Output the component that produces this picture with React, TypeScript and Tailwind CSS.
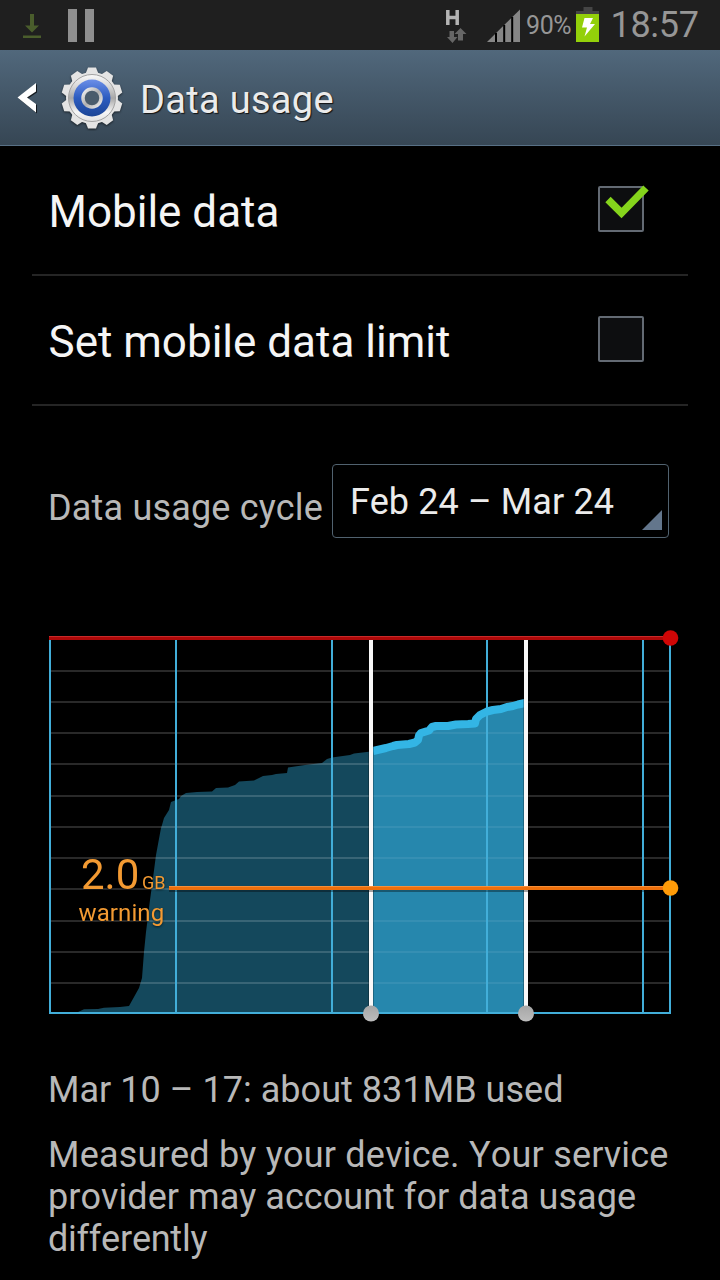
import type { ReactNode } from 'react';

// Chart geometry, in the svg's own units
const GRID_ROWS = [51, 82, 113, 144, 176, 207, 238, 269, 301, 332, 363];
const WEEK_LINES = [136, 292, 447, 603];
const SWEEP_LEFT = 331;
const SWEEP_RIGHT = 486;

const earlierArea =
  'M38 392 L44 389.3 L58 389 L64 387.800 L80 387 L89 386 L99 368 L102 358 L104 332 L106 312 L110 280 L113 258 L116 235 L121 208 L122 205 L124 198 L129 190 L131 182 L136 180 L139 179 L141 176 L146 173 L157 172 L172 171.5 L176 168 L188 167.5 L195 165 L199 161.5 L214 160.5 L218 158.5 L223 156 L232 155 L236 154 L247 153 L248 147.5 L265 145 L282 143 L287 139 L292 137.5 L310 135 L314 133.5 L331 131.5 V392 Z';

const selectedLine =
  'M333 131 L346 128 L353 126 L357 125 L369 124 L375 122.5 L378 120 L379 115.5 L381 113 L389 110.5 L392 107 L396 106 L408 106 L416 104.5 L428 104 L435 103.5 L436 99 L440 95 L447 91.5 L453 90 L461 89 L467 87 L473 86 L478 84.5 L485 83';

const gearTeeth = [0, 36, 72, 108, 144, 180, 216, 252, 288, 324];

function DownloadIcon() {
  return (
    <svg width="20" height="26" viewBox="0 0 20 26" fill="#4a5d2c">
      <path d="M8 0h4v11.500h5L10 18.500 3 11.500h5zM1 21.500h18v2.500H1z" />
    </svg>
  );
}

function NetworkIcon() {
  return (
    <svg width="24" height="36" viewBox="0 0 24 36">
      <path d="M2.800 2v15M12.200 2v15M2.500 9.500h10" stroke="#b4b4b4" strokeWidth="3.500" fill="none" />
      <path d="M4.500 23H9v6h3.500L7.500 35 2 29h2.500zM13 32.500V26H9.500L15.500 20l6 6H18v6.500z" fill="#666" />
    </svg>
  );
}

function SignalIcon() {
  return (
    <svg width="34" height="34" viewBox="0 0 34 34">
      <path d="M0 34L33 1.500V34z" fill="#868686" />
      <path d="M9 25v9M17.200 17v17M25.200 9v25" stroke="#000" strokeWidth="2" />
    </svg>
  );
}

function BatteryIcon() {
  return (
    <svg width="24" height="36" viewBox="0 0 24 36">
      <path d="M7.500 0h9v4H23v4H0V4h7.500z" fill="#454545" />
      <path d="M0 7h23v28H0z" fill="#93d00a" />
      <path d="M8.500 11h8.500l-3 6h5L8.500 29.500l2.500-9H6z" fill="#fff" />
    </svg>
  );
}

function SettingsGear() {
  return (
    <svg width="64" height="66" viewBox="-32 -33 64 66">
      <defs>
        <linearGradient id="metal" x1="0" y1="0" x2="0" y2="1">
          <stop offset="0" stopColor="#fafafa" />
          <stop offset=".25" stopColor="#d8d8d8" />
          <stop offset=".5" stopColor="#a8a8a8" />
          <stop offset=".8" stopColor="#f6f6f6" />
          <stop offset="1" stopColor="#e2e2e2" />
        </linearGradient>
        <linearGradient id="ring" x1="0" y1="0" x2="1" y2="1">
          <stop offset="0" stopColor="#f4f4f4" />
          <stop offset=".5" stopColor="#b0b0b0" />
          <stop offset="1" stopColor="#ececec" />
        </linearGradient>
        <linearGradient id="blue" x1="0" y1="0" x2="0" y2="1">
          <stop offset="0" stopColor="#6c8fe8" />
          <stop offset=".5" stopColor="#2c5cc0" />
          <stop offset="1" stopColor="#1b4596" />
        </linearGradient>
      </defs>
      <g className="drop-shadow-[0_1px_1px_rgba(0,0,0,0.6)]" fill="#e4e4e4">
        {gearTeeth.map((angle) => (
          <path key={angle} d="M-6.500 -24L-4 -30.500H4L6.500 -24z" transform={`rotate(${angle})`} />
        ))}
        <circle r="26" />
      </g>
      <circle r="23.500" fill="url(#metal)" stroke="#a2a2a2" />
      <circle r="18.500" fill="url(#blue)" />
      <circle r="9" fill="#4a5c6c" stroke="url(#ring)" strokeWidth="3.500" />
    </svg>
  );
}

function StatusBar() {
  return (
    <div className="flex h-[50px] items-start bg-[#1f1f1f] text-[#969696]">
      <div className="mt-[13.500px] ml-[22px]">
        <DownloadIcon />
      </div>
      <div className="mt-[9px] ml-[26px] flex gap-2">
        <span className="h-[33px] w-[9px] bg-[#8f8f8f]" />
        <span className="h-[33px] w-[9px] bg-[#8f8f8f]" />
      </div>
      <div className="mt-2 ml-[351px]">
        <NetworkIcon />
      </div>
      <div className="mt-2 ml-[18px]">
        <SignalIcon />
      </div>
      <span className="mt-[10px] ml-[5px] w-[50px] text-[25px] leading-8 tracking-[-0.400px] whitespace-nowrap">90%</span>
      <div className="mt-[7px] shrink-0">
        <BatteryIcon />
      </div>
      <span className="mt-[5px] ml-[10.500px] text-[36px] leading-10 tracking-[-0.300px] whitespace-nowrap">18:57</span>
    </div>
  );
}

function Header() {
  return (
    <header className="flex h-24 items-center border-b border-[#587085] bg-linear-to-b from-[#51687c] to-[#364654]">
      <svg className="ml-[16px] drop-shadow-[1px_1px_0_rgba(0,0,0,0.7)]" width="22" height="32" viewBox="0 0 22 32">
        <path d="M20 1v8.500L11 15.500l9 6.500v8.500L1.500 15.500z" fill="#fff" />
      </svg>
      <div className="ml-[22px]">
        <SettingsGear />
      </div>
      <h1 className="mt-1 ml-[16px] text-[38px] leading-[48px] tracking-[0.300px] text-[#ebebeb] [text-shadow:1px_1px_1px_#111]">
        Data usage
      </h1>
    </header>
  );
}

function SettingRow({ label, checked = false }: { label: ReactNode; checked?: boolean }) {
  return (
    <div className="mx-8 flex h-[130px] items-center justify-between border-b-2 border-[#252525] pr-[44px] pl-[16.500px]">
      <span className="mt-[3px] text-[44px] leading-[52px] text-[#f5f5f5]">{label}</span>
      <div className="relative -mt-[3px] h-[46px] w-[46px] rounded-[2px] border-2 border-[#636a73] bg-[#0d0e10]">
        {checked && (
          <svg className="absolute -top-[3px] left-1" width="48" height="36" viewBox="0 0 48 36">
            <path d="M4 14.500L17.500 28 42 3" fill="none" stroke="#85d41c" strokeWidth="7.500" />
          </svg>
        )}
      </div>
    </div>
  );
}

function UsageChart() {
  return (
    <svg className="ml-10 block" width="640" height="406" viewBox="0 0 640 406">
      <defs>
        <linearGradient id="handle" x1="0" y1="0" x2="0" y2="1">
          <stop offset="0" stopColor="#a6a6a6" />
          <stop offset="1" stopColor="#bdbdbd" />
        </linearGradient>
      </defs>

      <path d={earlierArea} fill="#14485c" />
      <path d={`${selectedLine} V393 H333 Z`} fill="#2687ad" />

      {GRID_ROWS.map((y) => (
        <path key={y} d={`M11 ${y}H629`} stroke="#fff" strokeOpacity=".16" strokeWidth="2" />
      ))}
      {/* the selected range tints the grid rows behind it */}
      <path d={`${selectedLine} V393 H333 Z`} fill="#2687ad" fillOpacity=".55" />
      {WEEK_LINES.map((x) => (
        <path key={x} d={`M${x} 20V392`} stroke="#42aed9" strokeWidth="2" />
      ))}
      <path d="M10 20V393H630V20" fill="none" stroke="#42aed9" strokeWidth="2" />
      <path d={selectedLine} fill="none" stroke="#33b5e5" strokeWidth="8" strokeLinejoin="round" />

      {[SWEEP_LEFT, SWEEP_RIGHT].map((x) => (
        <g key={x}>
          <path d={`M${x} 20V393`} stroke="#000" strokeOpacity=".25" strokeWidth="6" />
          <path d={`M${x} 20V388`} stroke="#f8f8f8" strokeWidth="4" />
          <circle cx={x} cy="393.500" r="8" fill="url(#handle)" />
        </g>
      ))}

      {/* limit */}
      <path d="M9 18H630" stroke="#ad0808" strokeWidth="4" />
      <path d="M9 16.500H630" stroke="#c92a2a" />
      <circle cx="630.500" cy="18" r="7.800" fill="#d00606" />

      {/* warning */}
      <path d="M129 271H630" stroke="#000" strokeOpacity=".35" strokeWidth="2" />
      <path d="M129 268H630" stroke="#ee6f0b" strokeWidth="4" />
      <path d="M129 266.500H630" stroke="#f78f38" />
      <circle cx="630.500" cy="268" r="7.800" fill="#ff9b08" />
      <g fill="#f39a32" className="drop-shadow-[0_1px_1px_rgba(0,0,0,0.6)]">
        <text x="41" y="269" fontSize="42">2.0</text>
        <text x="102" y="269" fontSize="18">GB</text>
        <text x="38.500" y="301" fontSize="24" letterSpacing=".1">warning</text>
      </g>
    </svg>
  );
}

export default function App() {
  return (
    <div className="h-[1280px] w-[720px] overflow-hidden bg-black font-[Roboto,sans-serif]">
      <StatusBar />
      <Header />
      <main>
        <SettingRow label="Mobile data" checked />
        <SettingRow label="Set mobile data limit" />

        <div className="flex pt-[58px] pl-12">
          <span className="mt-[22px] w-[284px] text-[36px] leading-[44px] tracking-[0.180px] whitespace-nowrap text-[#b8b8b8]">
            Data usage cycle
          </span>
          <div className="flex h-[74px] w-[337px] items-end justify-between rounded-[4px] border border-[#51626f] pr-[6px] pb-[7px] pl-[17px]">
            <span className="mb-[6px] text-[36px] leading-[44px] tracking-[0.120px] whitespace-nowrap text-[#ebebeb]">
              Feb 24 – Mar 24
            </span>
            <svg width="20" height="20" viewBox="0 0 20 20">
              <path d="M20 0v20H0z" fill="#63768c" />
            </svg>
          </div>
        </div>

        <div className="mt-[82px]">
          <UsageChart />
        </div>

        <div className="pt-[43px] pl-12 text-[36px] leading-[42px] whitespace-nowrap text-[#b8b8b8] [font-kerning:none]">
          <p className="tracking-[0.040px]">Mar 10 – 17: about 831MB used</p>
          <p className="mt-[23px]">
            <span className="tracking-[0.210px]">Measured by your device. Your service</span>
            <br />
            <span className="tracking-[0.040px]">provider may account for data usage</span>
            <br />
            <span className="tracking-[-0.250px]">differently</span>
          </p>
        </div>
      </main>
    </div>
  );
}
